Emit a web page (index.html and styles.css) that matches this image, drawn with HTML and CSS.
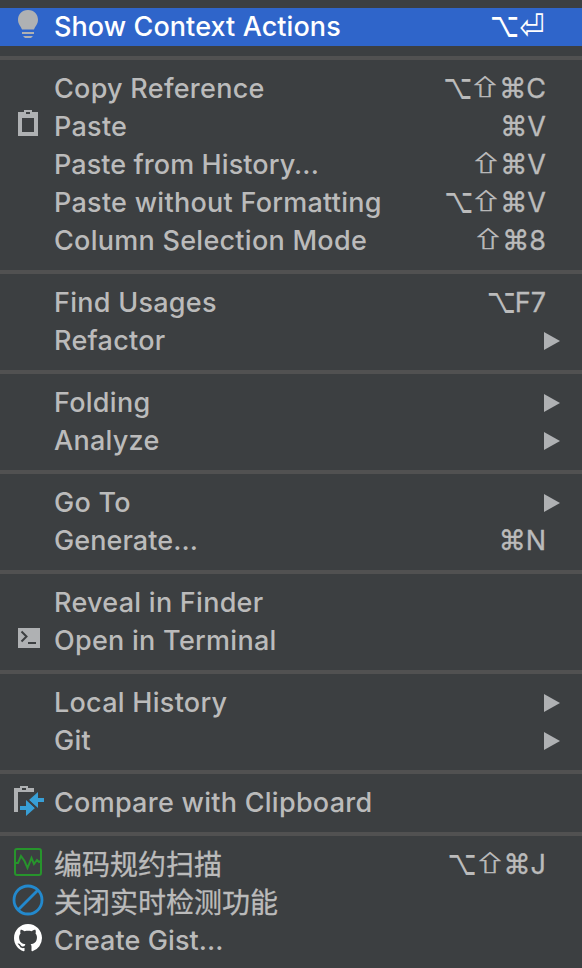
FILE: index.html
```
<!DOCTYPE html>
<html lang="en">
<head>
<meta charset="utf-8">
<title>Editor context menu</title>
<link rel="stylesheet" href="styles.css">
</head>
<body>
<ul class="menu">
  <li class="item selected">
    <svg class="icon" viewBox="0 0 32 32"><path fill="#afb1b3" d="M16 0C9.500 0 6 4.700 6 9.800c0 4.500 2.600 6 4 9.700h12c1.400-3.700 4-5.200 4-9.700C26 4.700 22.500 0 16 0zM10 22h12v2H10zM11 26h10l-2 2h-6z"/></svg>
    <span class="label">Show Context Actions</span>
    <span class="keys"><span class="key opt">⌥</span><span class="key ret">⏎</span></span>
  </li>
  <li class="separator"></li>
  <li class="item"><span class="label">Copy Reference</span><span class="keys"><span class="key opt">⌥</span><span class="key shift">⇧</span><span class="key cmd">⌘</span>C</span></li>
  <li class="item">
    <svg class="icon" viewBox="0 0 32 32"><path fill="#afb1b3" fill-rule="evenodd" d="M6 2h6V0h8v2h6v24H6zM10 8v14h12V8zM14 2v2h4V2z"/></svg>
    <span class="label">Paste</span><span class="keys"><span class="key cmd">⌘</span>V</span>
  </li>
  <li class="item"><span class="label dotted">Paste from History...</span><span class="keys"><span class="key shift">⇧</span><span class="key cmd">⌘</span>V</span></li>
  <li class="item"><span class="label">Paste without Formatting</span><span class="keys"><span class="key opt">⌥</span><span class="key shift">⇧</span><span class="key cmd">⌘</span>V</span></li>
  <li class="item"><span class="label">Column Selection Mode</span><span class="keys"><span class="key shift">⇧</span><span class="key cmd">⌘</span>8</span></li>
  <li class="separator"></li>
  <li class="item"><span class="label">Find Usages</span><span class="keys"><span class="key opt">⌥</span>F7</span></li>
  <li class="item"><span class="label">Refactor</span><span class="arrow"></span></li>
  <li class="separator"></li>
  <li class="item"><span class="label">Folding</span><span class="arrow"></span></li>
  <li class="item"><span class="label">Analyze</span><span class="arrow"></span></li>
  <li class="separator"></li>
  <li class="item"><span class="label">Go To</span><span class="arrow"></span></li>
  <li class="item"><span class="label dotted">Generate...</span><span class="keys"><span class="key cmd">⌘</span>N</span></li>
  <li class="separator"></li>
  <li class="item"><span class="label">Reveal in Finder</span></li>
  <li class="item">
    <svg class="icon" viewBox="0 0 32 32"><path fill="#afb1b3" d="M6 4h22v20H6z"/><path fill="none" stroke="#3c3f41" stroke-width="2" d="M9.500 7.500l5 5-5 5M16 19h8"/></svg>
    <span class="label">Open in Terminal</span>
  </li>
  <li class="separator"></li>
  <li class="item"><span class="label">Local History</span><span class="arrow"></span></li>
  <li class="item"><span class="label">Git</span><span class="arrow"></span></li>
  <li class="separator"></li>
  <li class="item">
    <svg class="icon" viewBox="0 0 32 32"><path fill="#afb1b3" fill-rule="evenodd" d="M2 2h6V0h8v2h6v4H6v20H2zM10 2v2h4V2z"/><path fill="#389fd6" d="M17 14l9-8v6h6v4h-6v6zM8 20h6v-6l9 8-9 8v-6H8z"/><path stroke="#3c3f41" stroke-width="1.500" d="M14.500 12.500l11 11"/></svg>
    <span class="label">Compare with Clipboard</span>
  </li>
  <li class="separator"></li>
  <li class="item">
    <svg class="icon raised" viewBox="0 0 32 32" fill="none" stroke="#27942c" stroke-width="2"><rect x="3" y="3" width="26" height="26" rx="2"/><path d="M4 17h2l3-7 3.500 5 3 7 4-10 2.500 6 3-4 2 2 2-1"/></svg>
    <span class="label cjk">编码规约扫描</span><span class="keys"><span class="key opt">⌥</span><span class="key shift">⇧</span><span class="key cmd">⌘</span>J</span>
  </li>
  <li class="item">
    <svg class="icon raised" viewBox="0 0 32 32" fill="none" stroke="#2389cd" stroke-width="2.800"><circle cx="16" cy="16" r="14"/><path d="M6 26L26 6"/></svg>
    <span class="label cjk">关闭实时检测功能</span>
  </li>
  <li class="item">
    <svg class="icon raised" viewBox="0 0 32 32"><path fill="#fff" transform="translate(2 2) scale(1.750)" d="M8 0C3.580 0 0 3.580 0 8c0 3.540 2.290 6.530 5.470 7.590.4.070.55-.17.55-.38 0-.19-.01-.82-.01-1.490-2.010.37-2.530-.49-2.690-.94-.09-.23-.48-.94-.82-1.130-.28-.15-.68-.52-.01-.53.63-.01 1.080.58 1.230.82.72 1.210 1.870.87 2.330.66.07-.52.28-.87.51-1.070-1.780-.2-3.640-.89-3.640-3.950 0-.87.31-1.590.82-2.150-.08-.2-.36-1.020.08-2.120 0 0 .67-.21 2.200.82.64-.18 1.320-.27 2-.27s1.360.09 2 .27c1.530-1.040 2.200-.82 2.200-.82.44 1.100.16 1.920.08 2.120.51.56.82 1.270.82 2.150 0 3.070-1.870 3.750-3.650 3.950.29.25.54.73.54 1.480 0 1.070-.01 1.930-.01 2.200 0 .21.15.46.55.38A8.010 8.010 0 0 0 16 8c0-4.420-3.580-8-8-8z"/></svg>
    <span class="label dotted">Create Gist...</span>
  </li>
</ul>
</body>
</html>
```
FILE: styles.css
```
body {
  margin: 0;
  background: #3c3f41;
  overflow: hidden;
}
.menu {
  box-sizing: border-box;
  height: 968px;
  margin: 0;
  padding: 8px 0 0;
  list-style: none;
  color: #bbb;
  font: 500 27px/38px Inter, "Noto Sans CJK SC", sans-serif;
}
.item {
  display: grid;
  grid-template-columns: 54px 1fr auto;
  height: 38px;
  white-space: nowrap;
}
.selected {
  background: #2f65ca;
  color: #fff;
}
.icon {
  grid-column: 1;
  width: 32px;
  height: 32px;
  margin: 2px 0 0 12px;
}
.raised {
  margin-top: 0;
}
.label {
  grid-column: 2;
  letter-spacing: 0.27px;
}
.selected .label,
.label.dotted {
  letter-spacing: 0.08px;
}
.label.cjk {
  font-size: 28px;
  font-weight: 400;
  letter-spacing: 0;
  -webkit-text-stroke: 0.3px currentColor;
}
.keys {
  grid-column: 3;
  display: flex;
  margin-right: 36px;
  font-weight: 400;
  -webkit-text-stroke: 0.3px currentColor;
}
.key {
  font-family: "DejaVu Sans", sans-serif;
  text-align: center;
  -webkit-text-stroke: 0.4px currentColor;
}
.opt {
  width: 28px;
  font-size: 25px;
  transform: scaleY(1.4) translateY(-1px);
  -webkit-text-stroke-width: 0;
}
.shift {
  width: 28px;
  font-family: "Noto Sans CJK JP", sans-serif;
  transform: translateY(-3px) scale(1.15, 0.8);
  -webkit-text-stroke-width: 0.7px;
}
.cmd {
  width: 27px;
}
.ret {
  width: 28px;
  transform: scale(1.1, 1.3);
  -webkit-text-stroke-width: 0;
}
.arrow {
  grid-column: 3;
  width: 0;
  height: 0;
  margin: 10px 22px 0 0;
  border: solid transparent;
  border-width: 9px 0 9px 16px;
  border-left-color: #afb1b3;
}
.separator {
  height: 4px;
  padding: 10px 0;
  background: #515151 content-box;
}
```
